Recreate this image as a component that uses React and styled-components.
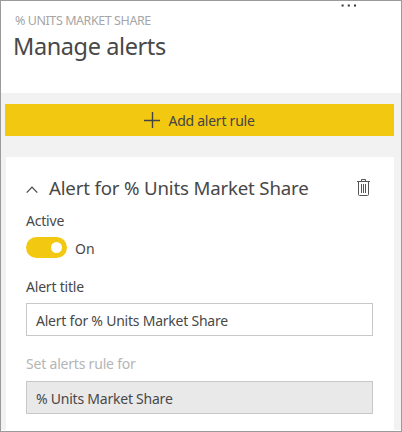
import React from 'react';
import styled, { createGlobalStyle } from 'styled-components';

const GlobalStyle = createGlobalStyle`
  * { box-sizing: border-box; }
  body { margin: 0; background: #fff; }
  h1, h2, p { margin: 0; font-weight: 400; }
`;

const Panel = styled.main`
  display: flex;
  flex-direction: column;
  width: 402px;
  height: 432px;
  border: 1px solid #9b9b9b;
  background: #fff;
  color: #484848;
  font-family: 'Noto Sans', 'Open Sans', sans-serif;
  font-size: 14px;
  white-space: nowrap;
  overflow: hidden;
`;

const Header = styled.header`
  display: flex;
  justify-content: space-between;
  height: 92px;
  padding: 0 44px 0 12px;
`;

const Heading = styled.div`
  padding-top: 11px;
`;

const Context = styled.p`
  font-size: 12.5px;
  line-height: 18px;
  letter-spacing: -0.43px;
  color: #a6a6a6;
  padding-left: 2px;
`;

const Title = styled.h1`
  font-size: 23.5px;
  line-height: 32px;
  letter-spacing: -0.4px;
`;

const IconButton = styled.button`
  display: flex;
  padding: 0;
  border: 0;
  background: none;
  color: inherit;
`;

const Body = styled.section`
  display: flex;
  flex-direction: column;
  gap: 21px;
  height: 337px;
  padding: 11px 7px 0 4px;
  background: #f2f2f2;
`;

const AddButton = styled.button`
  display: flex;
  align-items: center;
  justify-content: center;
  gap: 8px;
  width: 389px;
  height: 32px;
  flex: none;
  padding: 0;
  border: 0;
  background: #f2c811;
  color: #444;
  font: inherit;
  letter-spacing: -0.25px;
`;

const Card = styled.article`
  flex: 1;
  margin-left: 1px;
  padding: 0 20px;
  background: #fff;
`;

const CardHeader = styled.div`
  display: flex;
  align-items: center;
  height: 54px;
  padding: 7px 4px 0 0;
`;

const CardTitle = styled.h2`
  flex: 1;
  margin-left: 11px;
  font-size: 18.67px;
  line-height: 26px;
  letter-spacing: -0.18px;
`;

const Label = styled.p`
  height: ${(p) => p.$height}px;
  padding-top: ${(p) => p.$offset || 0}px;
  line-height: 20px;
  letter-spacing: -0.2px;
  color: ${(p) => (p.$muted ? '#b5b5b5' : 'inherit')};
`;

const ToggleRow = styled.div`
  display: flex;
  align-items: center;
  gap: 8px;
  height: 21px;
  margin-bottom: 18px;
`;

const ToggleState = styled.span`
  padding-top: 2px;
`;

const Toggle = styled.button`
  display: flex;
  align-items: center;
  justify-content: flex-end;
  width: 41px;
  height: 21px;
  padding: 0 5px 0 0;
  border: 0;
  border-radius: 11px;
  background: #f2c811;
`;

const Knob = styled.span`
  width: 11px;
  height: 11px;
  border-radius: 50%;
  background: #fff;
`;

const Field = styled.div`
  display: flex;
  align-items: center;
  width: 347px;
  height: 33px;
  margin-bottom: ${(p) => p.$gap || 0}px;
  padding: 1px 0 0 9px;
  border: 1px solid #c8c8c8;
  background: ${(p) => (p.$disabled ? '#e9e9e9' : '#fff')};
  letter-spacing: -0.23px;
`;

const DotsIcon = () => (
  <svg width="16" height="8" fill="#333">
    <rect x="0.6" y="3.5" width="2" height="2" />
    <rect x="6.8" y="3.5" width="2" height="2" />
    <rect x="13" y="3.5" width="2" height="2" />
  </svg>
);

const PlusIcon = () => (
  <svg width="16" height="16" stroke="#444" strokeWidth="1.4">
    <path d="M8.5 0v16M0 8.5h16" />
  </svg>
);

const ChevronIcon = () => (
  <svg width="12" height="12" fill="none" stroke="#444" strokeWidth="1.2">
    <path d="M.7 10.7 6 5.2 11.3 10.7" />
  </svg>
);

const TrashIcon = () => (
  <svg width="13" height="17" fill="none" stroke="#555">
    <path d="M0 2.5h13M4.5 2.5v-2h4v2M1.5 2.5v13q0 1 1 1h8q1 0 1-1v-13M4.5 5v9M6.5 5v9M8.5 5v9" />
  </svg>
);

export default function App() {
  return (
    <>
      <GlobalStyle />
      <Panel>
        <Header>
          <Heading>
            <Context>% UNITS MARKET SHARE</Context>
            <Title>Manage alerts</Title>
          </Heading>
          <div>
            <IconButton aria-label="More options"><DotsIcon /></IconButton>
          </div>
        </Header>
        <Body>
          <AddButton><PlusIcon />Add alert rule</AddButton>
          <Card>
            <CardHeader>
              <ChevronIcon />
              <CardTitle>Alert for % Units Market Share</CardTitle>
              <IconButton aria-label="Delete alert"><TrashIcon /></IconButton>
            </CardHeader>
            <Label $height={26}>Active</Label>
            <ToggleRow>
              <Toggle role="switch" aria-checked="true" aria-label="Active"><Knob /></Toggle>
              <ToggleState>On</ToggleState>
            </ToggleRow>
            <Label $height={27} $offset={1}>Alert title</Label>
            <Field $gap={18}>Alert for % Units Market Share</Field>
            <Label $height={27} $muted>Set alerts rule for</Label>
            <Field $disabled>% Units Market Share</Field>
          </Card>
        </Body>
      </Panel>
    </>
  );
}
